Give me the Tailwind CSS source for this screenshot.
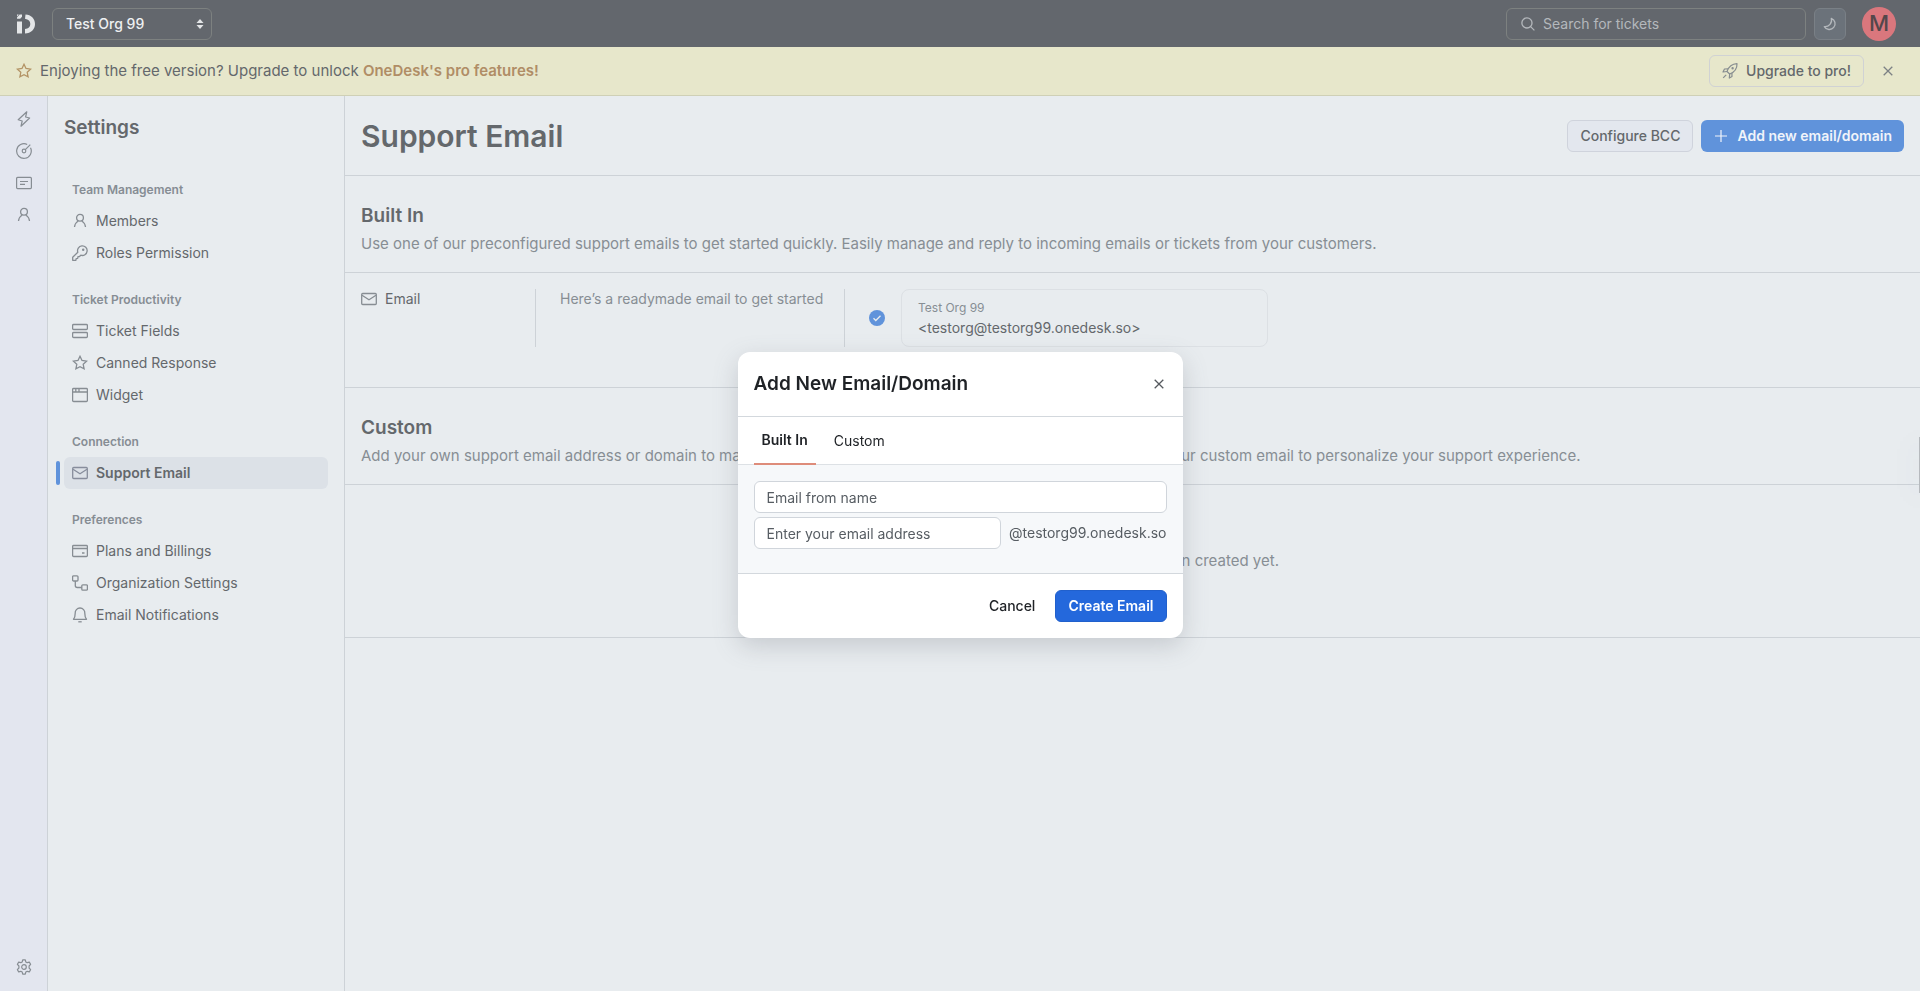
<!DOCTYPE html>
<html lang="en">
<head>
  <meta charset="UTF-8" />
  <meta name="viewport" content="width=device-width, initial-scale=1" />
  <title>Support Email - OneDesk</title>
  <script src="https://cdn.jsdelivr.net/npm/@tailwindcss/browser@4"></script>
</head>
<body class="flex flex-col h-screen overflow-hidden bg-[#e8ecef] font-['Inter',sans-serif] text-sm text-[#64686c]">

  <!-- Shared icons -->
  <svg class="hidden">
    <symbol id="user" viewBox="0 0 16 16"><circle cx="8" cy="4.800" r="3.400" /><path d="M2.500 14c.3-2.700 1.600-4.800 3.700-6M13.500 14c-.3-2.700-1.600-4.800-3.700-6" /></symbol>
    <symbol id="star" viewBox="0 0 16 16"><path d="M8 1.300l2 4.200 4.600.6-3.400 3.200.9 4.600L8 11.700l-4.100 2.200.9-4.600L1.400 6.100 6 5.500z" /></symbol>
    <symbol id="mail" viewBox="0 0 16 16"><rect x=".7" y="2.500" width="14.600" height="11" rx="1" /><path d="M1 4.300l7 4.500 7-4.500" /></symbol>
    <symbol id="close" viewBox="0 0 16 16"><path d="M3.700 3.700l8.600 8.600M12.300 3.700l-8.600 8.600" /></symbol>
  </svg>

  <!-- Top bar -->
  <header class="flex items-center shrink-0 h-[47px] pl-4 pr-6 bg-[#63676d]">
    <a href="#" aria-label="OneDesk" class="mr-4">
      <svg class="w-5 h-5" viewBox="0 0 20 20" fill="#e4e6e8"><path d="M1 .5h1.800L1 2.500zM3.600.5H6v2.200L4.200 4.800H1V3.600z" /><path d="M1 7.500h5V19.500H1z" /><path d="M9.500.5C15 .8 19 4.500 19 10S15 19.300 9 19.500V15c3.500-.3 5.300-2.200 5.300-5S12.500 5.300 9 4.800z" /></svg>
    </a>
    <div class="relative">
      <select aria-label="Organization" class="appearance-none block w-40 h-8 pl-[13px] rounded-md border border-[#7d8180] bg-transparent font-medium text-[#eef0f2]">
        <option>Test Org 99</option>
      </select>
      <svg class="absolute right-2 top-[11px] w-2 h-2.5 pointer-events-none" viewBox="0 0 8 10" fill="#e4e6e8"><path d="M4 0l3.500 4h-7zM4 10L.5 6h7z" /></svg>
    </div>
    <label class="flex items-center w-[300px] h-8 ml-auto pl-3.5 gap-2 rounded-md border border-[#7d8180]">
      <svg class="w-3.5 h-3.5 shrink-0" viewBox="0 0 16 16" fill="none" stroke="#b4b8bc" stroke-width="1.500"><circle cx="6.800" cy="6.800" r="5.800" /><path d="M11 11l4.300 4.300" /></svg>
      <input type="search" aria-label="Search for tickets" placeholder="Search for tickets" class="w-full bg-transparent outline-none placeholder:text-[#b4b8bc]" />
    </label>
    <button aria-label="Dark mode" class="flex items-center justify-center w-8 h-8 ml-2 rounded-md border border-[#7a8086] bg-[#6b727a]">
      <svg class="w-3.5 h-3.5" viewBox="0 0 16 16" fill="none" stroke="#b4b8bc" stroke-width="1.500" stroke-linejoin="round"><path d="M9.500 1.500a7.500 7.500 0 0 1-8 9.500 6.600 6.600 0 1 0 8-9.500z" /></svg>
    </button>
    <button aria-label="Account" class="flex items-center justify-center w-[34px] h-[34px] ml-4 rounded-full bg-[#da777d] text-[22px] font-medium text-[#54474b]">M</button>
  </header>

  <!-- Upgrade banner -->
  <div class="flex items-center shrink-0 h-[49px] px-4 border-b border-[#cfd0b6] bg-[#e7e7cb] text-[15px]">
    <svg class="w-4 h-4 mr-2 fill-none stroke-[#b39365] stroke-[1.3]"><use href="#star" /></svg>
    <p>Enjoying the free version? Upgrade to unlock <a href="#" class="font-semibold text-[#b08d66]">OneDesk's pro features!</a></p>
    <button class="flex items-center gap-2 h-8 ml-auto px-3 rounded-md border border-[#d0d2d4] text-sm font-medium">
      <svg class="w-4 h-4" viewBox="0 0 16 16" fill="none" stroke="#878d90" stroke-width="1.200" stroke-linejoin="round"><path d="M5 8.500c1.500-4.200 5-7.500 10-7.800.2 5-3 8.600-7.300 10.300z" /><path d="M6.200 5.800L2.500 6 1 9l4-.5M9.900 9.900l.1 3.600L7.300 15l.4-4" /><circle cx="10.600" cy="5.300" r=".6" /><path d="M4.200 11.800l-3 3" /></svg>
      Upgrade to pro!
    </button>
    <button aria-label="Dismiss" class="ml-2 p-2"><svg class="w-4 h-4 fill-none stroke-[#7c8184] stroke-[1.3]"><use href="#close" /></svg></button>
  </div>

  <div class="flex flex-1 min-h-0">

    <!-- Icon rail -->
    <nav class="flex flex-col items-center gap-4 shrink-0 w-12 pt-[15px] pb-4 border-r border-[#cdd2d7] bg-[#e3e6ef]">
      <a href="#" aria-label="Activity"><svg class="w-4 h-4" viewBox="0 0 16 16" fill="none" stroke="#878d93" stroke-width="1.200" stroke-linejoin="round"><path d="M10.800.8L2.200 8.800l4 1.200L5 15.200l8.600-8.200-4-1z" /></svg></a>
      <a href="#" aria-label="Dashboard"><svg class="w-4 h-4" viewBox="0 0 16 16" fill="none" stroke="#878d93" stroke-width="1.200"><path d="M11.200 1.500A7.300 7.300 0 1 0 14.500 4.800" /><circle cx="8" cy="8" r="1.800" /><path d="M9.300 6.700L14.300 1.700" /></svg></a>
      <a href="#" aria-label="Tickets"><svg class="w-4 h-4" viewBox="0 0 16 16" fill="none" stroke="#878d93" stroke-width="1.200"><rect x=".6" y="2.400" width="14.800" height="11.200" rx="1" /><path d="M4 6.500h8M4 9.300h5" /></svg></a>
      <a href="#" aria-label="Customers"><svg class="w-4 h-4 fill-none stroke-[#878d93] stroke-[1.3]"><use href="#user" /></svg></a>
      <a href="#" aria-label="Settings" class="mt-auto"><svg class="w-4 h-4" viewBox="0 0 16 16" fill="none" stroke="#878d93" stroke-width="1.200" stroke-linejoin="round"><circle cx="8" cy="8" r="2.300" /><path d="M6.700.8h2.600l.5 2.100 1.400.8 2.100-.6 1.300 2.200L13.100 7v2l1.500 1.700-1.300 2.200-2.100-.6-1.400.8-.5 2.100H6.700l-.5-2.100-1.400-.8-2.100.6-1.300-2.200L2.900 9V7L1.400 5.300l1.300-2.200 2.100.6 1.400-.8z" /></svg></a>
    </nav>

    <!-- Settings menu -->
    <aside class="shrink-0 w-[297px] px-4 border-r border-[#cdd2d7]">
      <h2 class="pt-4 pb-8 text-[19px] leading-[31px] font-semibold">Settings</h2>
      <nav class="flex flex-col gap-4">
        <section>
          <h3 class="pl-2 text-xs leading-[30px] font-semibold text-[#868d94]">Team Management</h3>
          <a href="#" class="flex items-center gap-2 h-8 px-2"><svg class="w-4 h-4 fill-none stroke-[#878d93] stroke-[1.3]"><use href="#user" /></svg>Members</a>
          <a href="#" class="flex items-center gap-2 h-8 px-2"><svg class="w-4 h-4" viewBox="0 0 16 16" fill="none" stroke="#878d93" stroke-width="1.300" stroke-linejoin="round"><path d="M5.800 7.200A4.800 4.800 0 1 1 8.800 10.200L7.500 11.500 6 11.700 5.700 13.300 4.200 13.600 3.800 15.300H.7V12.300z" /><circle cx="11.200" cy="4.800" r=".6" /></svg>Roles Permission</a>
        </section>
        <section>
          <h3 class="pl-2 text-xs leading-[30px] font-semibold text-[#868d94]">Ticket Productivity</h3>
          <a href="#" class="flex items-center gap-2 h-8 px-2"><svg class="w-4 h-4" viewBox="0 0 16 16" fill="none" stroke="#878d93" stroke-width="1.300"><rect x=".6" y="1.500" width="14.800" height="5" rx="1" /><rect x=".6" y="9.500" width="14.800" height="5" rx="1" /></svg>Ticket Fields</a>
          <a href="#" class="flex items-center gap-2 h-8 px-2"><svg class="w-4 h-4 fill-none stroke-[#878d93] stroke-[1.3]"><use href="#star" /></svg>Canned Response</a>
          <a href="#" class="flex items-center gap-2 h-8 px-2"><svg class="w-4 h-4" viewBox="0 0 16 16" fill="none" stroke="#878d93" stroke-width="1.300"><rect x=".6" y="1.500" width="14.800" height="13" rx="1" /><path d="M.6 5h14.800M3.800 1.500V5M7 1.500V5" /></svg>Widget</a>
        </section>
        <section>
          <h3 class="pl-2 text-xs leading-[30px] font-semibold text-[#868d94]">Connection</h3>
          <a href="#" aria-current="page" class="relative flex items-center gap-2 h-8 px-2 rounded-md bg-[#dce1e7] font-semibold">
            <span class="absolute -left-2 top-1 w-1 h-6 rounded-sm bg-[#6093db]"></span>
            <svg class="w-4 h-4 fill-none stroke-[#878d9c] stroke-[1.3]"><use href="#mail" /></svg>Support Email
          </a>
        </section>
        <section>
          <h3 class="pl-2 text-xs leading-[30px] font-semibold text-[#868d94]">Preferences</h3>
          <a href="#" class="flex items-center gap-2 h-8 px-2"><svg class="w-4 h-4" viewBox="0 0 16 16" fill="none" stroke="#878d93" stroke-width="1.300"><rect x=".6" y="2.500" width="14.800" height="11" rx="1" /><path d="M.6 5.500h14.800M10 10h2.500" /></svg>Plans and Billings</a>
          <a href="#" class="flex items-center gap-2 h-8 px-2"><svg class="w-4 h-4" viewBox="0 0 16 16" fill="none" stroke="#878d93" stroke-width="1.300"><rect x=".6" y=".8" width="5.400" height="5.200" rx="1" /><rect x="9.800" y="9.800" width="5.600" height="5.400" rx="1" /><path d="M3.300 6v4.500a2 2 0 0 0 2 2h4.500" /></svg>Organization Settings</a>
          <a href="#" class="flex items-center gap-2 h-8 px-2"><svg class="w-4 h-4" viewBox="0 0 16 16" fill="none" stroke="#878d93" stroke-width="1.300" stroke-linejoin="round"><path d="M1.500 12.300c1.300-1.500 1.700-3 1.700-6A4.800 4.800 0 0 1 8 1a4.800 4.800 0 0 1 4.800 5.300c0 3 .4 4.500 1.700 6z" /><path d="M6.300 14.800h3.400" /></svg>Email Notifications</a>
        </section>
      </nav>
    </aside>

    <!-- Page -->
    <main class="flex-1 min-w-0">
      <div class="flex items-center gap-2 h-20 px-4 border-b border-[#cdd2d7]">
        <h1 class="mr-auto text-[30px] leading-10 font-semibold">Support Email</h1>
        <button class="h-8 px-3 rounded-md border border-[#cfd3dc] bg-[#e3e7ee] font-medium">Configure BCC</button>
        <button class="flex items-center gap-2 h-8 px-3 rounded-md bg-[#6093db] font-semibold text-[#f0f4fa]">
          <svg class="w-4 h-4" viewBox="0 0 16 16" fill="none" stroke="currentColor" stroke-width="1.200"><path d="M8 2v12M2 8h12" /></svg>
          Add new email/domain
        </button>
      </div>

      <section>
        <div class="px-4 pt-6 pb-4 border-b border-[#cdd2d7]">
          <h2 class="text-[19px] leading-8 font-semibold">Built In</h2>
          <p class="text-[15px] leading-6 text-[#878e94] whitespace-nowrap">Use one of our preconfigured support emails to get started quickly. Easily manage and reply to incoming emails or tickets from your customers.</p>
        </div>
        <div class="flex px-4 pt-4 pb-10 border-b border-[#cdd2d7]">
          <div class="flex gap-2 w-[175px] border-r border-[#cdd2d7]">
            <svg class="w-4 h-4 mt-0.5 fill-none stroke-[#878d93] stroke-[1.3]"><use href="#mail" /></svg>Email
          </div>
          <p class="w-[309px] pl-6 border-r border-[#cdd2d7] text-[#878e94]">Here’s a readymade email to get started</p>
          <div class="flex items-center gap-4 pl-6">
            <svg class="w-4 h-4" viewBox="0 0 16 16"><circle cx="8" cy="8" r="8" fill="#6093db" /><path d="M4.500 8.200l2.300 2.300 4.700-4.700" fill="none" stroke="#e8ecef" stroke-width="1.300" /></svg>
            <div class="w-[367px] h-[58px] px-4 pt-2 rounded-lg border border-[#dce0e4]">
              <p class="text-xs leading-5 text-[#878e94]">Test Org 99</p>
              <p>&lt;testorg@testorg99.onedesk.so&gt;</p>
            </div>
          </div>
        </div>
      </section>

      <section>
        <div class="px-4 pt-6 pb-4 border-b border-[#cdd2d7]">
          <h2 class="text-[19px] leading-8 font-semibold">Custom</h2>
          <p class="text-[15px] leading-6 text-[#878e94] whitespace-nowrap">Add your own support email address or domain to manage and reply to incoming customer emails or tickets. Use your custom email to personalize your support experience.</p>
        </div>
        <div class="flex items-center justify-center h-[153px] border-b border-[#cdd2d7] text-[15px] text-[#878e94]">No custom emails have been created yet.</div>
      </section>
    </main>
  </div>

  <!-- Feedback tab tucked against the window edge -->
  <div class="fixed right-0 top-[437px] w-px h-14 bg-[#b6babe] shadow-[0_4px_24px_rgba(90,95,130,0.35)]"></div>

  <!-- Modal -->
  <div class="fixed inset-0 flex items-center justify-center pb-px">
    <form role="dialog" aria-labelledby="modalTitle" class="w-[445px] rounded-xl bg-white text-[#1f2226] shadow-[0_8px_24px_rgba(100,105,115,0.25)]">
      <div class="flex items-center justify-between h-[65px] px-4 border-b border-[#d3d8dd]">
        <h2 id="modalTitle" class="text-[19px] font-semibold">Add New Email/Domain</h2>
        <button type="button" aria-label="Close"><svg class="w-4 h-4 fill-none stroke-[#55595e] stroke-[1.3]"><use href="#close" /></svg></button>
      </div>
      <div role="tablist" class="flex gap-2.5 h-12 px-4 border-b border-[#dde1e5]">
        <button type="button" role="tab" aria-selected="true" class="-mb-px px-2 border-b-2 border-[#de8c7a] font-semibold">Built In</button>
        <button type="button" role="tab" aria-selected="false" class="px-2">Custom</button>
      </div>
      <div class="px-4 pt-4 pb-6 border-b border-[#d3d8dd] bg-[#f6f8fa]">
        <input type="text" aria-label="Email from name" placeholder="Email from name" class="block w-full h-8 px-3 mb-1 rounded-md border border-[#d0d5db] bg-white placeholder:text-[#575d63]" />
        <div class="flex items-center gap-2">
          <input type="text" aria-label="Email address" placeholder="Enter your email address" class="flex-1 min-w-0 h-8 px-3 rounded-md border border-[#d0d5db] bg-white placeholder:text-[#575d63]" />
          <span class="text-[#575d63]">@testorg99.onedesk.so</span>
        </div>
      </div>
      <div class="flex justify-end gap-2 p-4">
        <button type="button" class="h-8 px-3 font-medium">Cancel</button>
        <button type="submit" class="h-8 px-3 rounded-md border border-[#2160cc] bg-[#2468dc] font-semibold text-white">Create Email</button>
      </div>
    </form>
  </div>

</body>
</html>
